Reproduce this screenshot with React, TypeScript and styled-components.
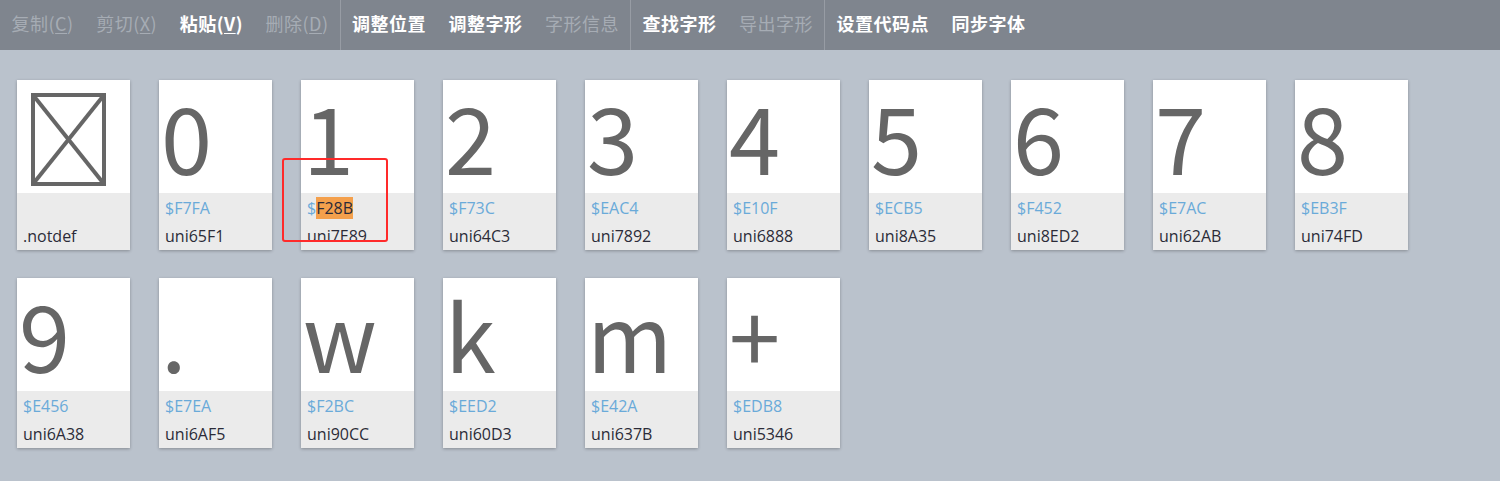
import styled, { createGlobalStyle } from "styled-components";

type Glyph = {
  char: string;
  code?: string;
  name: string;
  selected?: boolean;
};

type Tool = { label: string; key?: string; enabled: boolean } | "sep";

const tools: Tool[] = [
  { label: "复制", key: "C", enabled: false },
  { label: "剪切", key: "X", enabled: false },
  { label: "粘贴", key: "V", enabled: true },
  { label: "删除", key: "D", enabled: false },
  "sep",
  { label: "调整位置", enabled: true },
  { label: "调整字形", enabled: true },
  { label: "字形信息", enabled: false },
  "sep",
  { label: "查找字形", enabled: true },
  { label: "导出字形", enabled: false },
  "sep",
  { label: "设置代码点", enabled: true },
  { label: "同步字体", enabled: true },
];

const glyphs: Glyph[] = [
  { char: "", name: ".notdef" },
  { char: "0", code: "F7FA", name: "uni65F1" },
  { char: "1", code: "F28B", name: "uni7E89", selected: true },
  { char: "2", code: "F73C", name: "uni64C3" },
  { char: "3", code: "EAC4", name: "uni7892" },
  { char: "4", code: "E10F", name: "uni6888" },
  { char: "5", code: "ECB5", name: "uni8A35" },
  { char: "6", code: "F452", name: "uni8ED2" },
  { char: "7", code: "E7AC", name: "uni62AB" },
  { char: "8", code: "EB3F", name: "uni74FD" },
  { char: "9", code: "E456", name: "uni6A38" },
  { char: ".", code: "E7EA", name: "uni6AF5" },
  { char: "w", code: "F2BC", name: "uni90CC" },
  { char: "k", code: "EED2", name: "uni60D3" },
  { char: "m", code: "E42A", name: "uni637B" },
  { char: "+", code: "EDB8", name: "uni5346" },
];

const App = () => {
  return (
    <Wrapper>
      <GlobalStyle />
      <Toolbar>
        {tools.map((tool, i) =>
          tool === "sep" ? (
            <Separator key={i} />
          ) : (
            <ToolButton key={i} $enabled={tool.enabled}>
              {tool.label}
              {tool.key && (
                <>
                  (<u>{tool.key}</u>)
                </>
              )}
            </ToolButton>
          )
        )}
      </Toolbar>
      <GlyphGrid>
        {glyphs.map((g) => (
          <Card key={g.name}>
            <Preview>
              {g.char === "" ? (
                <NotdefBox viewBox="0 0 75 93">
                  <rect x="2" y="2" width="71" height="89" />
                  <line x1="2" y1="2" x2="73" y2="91" />
                  <line x1="73" y1="2" x2="2" y2="91" />
                </NotdefBox>
              ) : (
                <GlyphChar>{g.char}</GlyphChar>
              )}
            </Preview>
            <Labels>
              <Code>
                {g.code && (
                  <>
                    $
                    {g.selected ? <Highlight>{g.code}</Highlight> : g.code}
                  </>
                )}
              </Code>
              <Name>{g.name}</Name>
            </Labels>
            {g.selected && <SelectionMark />}
          </Card>
        ))}
      </GlyphGrid>
    </Wrapper>
  );
};

export default App;

const GlobalStyle = createGlobalStyle`
  html, body {
    margin: 0;
    padding: 0;
    height: 100%;
    background: #bac2cc;
  }
  #root {
    min-height: 100vh;
  }
`;

const Wrapper = styled.div`
  min-height: 100vh;
  background: #bac2cc;
  font-family: "Open Sans", "Noto Sans CJK SC", sans-serif;
`;

const Toolbar = styled.div`
  height: 50px;
  background: #7f858e;
  display: flex;
  align-items: stretch;
`;

const ToolButton = styled.div<{ $enabled: boolean }>`
  display: flex;
  align-items: center;
  padding: 0 11px 4px 11.5px;
  font-family: "Noto Sans CJK SC", sans-serif;
  font-size: 18px;
  letter-spacing: 0.5px;
  font-weight: ${(p) => (p.$enabled ? 700 : 400)};
  color: ${(p) => (p.$enabled ? "#ffffff" : "#a6acb4")};
  white-space: nowrap;

  u {
    text-underline-offset: 2px;
  }
`;

const Separator = styled.div`
  width: 1px;
  background: #979ca4;
`;

const GlyphGrid = styled.div`
  display: grid;
  grid-template-columns: repeat(10, 113px);
  column-gap: 29px;
  row-gap: 28px;
  padding: 30px 17px;
`;

const Card = styled.div`
  position: relative;
  height: 170px;
  background: #ffffff;
  box-shadow: 0 1px 3px rgba(0, 0, 0, 0.28);
  display: flex;
  flex-direction: column;
`;

const Preview = styled.div`
  height: 113px;
  padding: 5px 0 0 2px;
  box-sizing: border-box;
`;

const GlyphChar = styled.div`
  font-family: "Noto Sans CJK SC", sans-serif;
  font-size: 92px;
  line-height: 100px;
  height: 100px;
  color: #666666;
  white-space: pre;
`;

const NotdefBox = styled.svg`
  display: block;
  width: 75px;
  height: 93px;
  margin: 8px 0 0 12px;
  fill: none;
  stroke: #666666;
  stroke-width: 4;
`;

const Labels = styled.div`
  flex: 1;
  background: #ebebeb;
  padding: 1px 6px 0 6px;
  font-size: 16px;
  line-height: 28px;
`;

const Code = styled.div`
  height: 28px;
  color: #6aaad9;
`;

const Name = styled.div`
  color: #2b2b38;
`;

const Highlight = styled.span`
  background: #f4a04c;
  color: #2b2b38;
`;

const SelectionMark = styled.div`
  position: absolute;
  left: -19px;
  top: 78px;
  width: 106px;
  height: 84px;
  box-sizing: border-box;
  border: 2px solid #ff2a2a;
  border-radius: 3px;
`;
